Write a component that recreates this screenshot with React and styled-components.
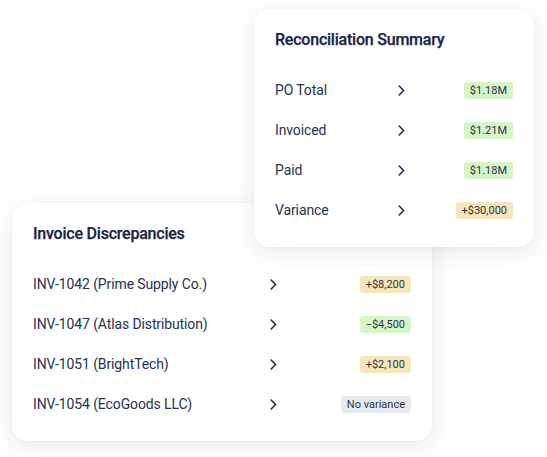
import React from "react";
import styled, { createGlobalStyle } from "styled-components";

const Global = createGlobalStyle`
  html, body { margin: 0; padding: 0; background: #ffffff; }
  body { font-family: Roboto, "Liberation Sans", Arial, sans-serif; }
`;

const Canvas = styled.div`
  width: 547px;
  height: 457px;
  overflow: hidden;
  display: flex;
  flex-direction: column;
`;

const Card = styled.section`
  position: relative;
  z-index: ${(p) => p.$z};
  box-sizing: border-box;
  width: ${(p) => p.$w}px;
  height: 238px;
  margin-left: ${(p) => p.$left}px;
  margin-top: ${(p) => p.$top}px;
  padding: 21px 21px 0 21px;
  background: #ffffff;
  border-radius: 16px;
  box-shadow: 0 6px 26px rgba(25, 35, 70, 0.09), 0 1px 4px rgba(25, 35, 70, 0.04);
`;

const Title = styled.h2`
  margin: 0 0 20px 0;
  height: 20px;
  line-height: 20px;
  font-size: 16px;
  font-weight: 500;
  letter-spacing: -0.22px;
  color: #1b2447;
  -webkit-text-stroke: 0.25px #1b2447;
`;

const Row = styled.div`
  display: grid;
  grid-template-columns: ${(p) => p.$labelW}px 7px 1fr;
  align-items: center;
  height: 40px;
`;

const Label = styled.span`
  font-size: 14px;
  letter-spacing: -0.12px;
  color: #283152;
  white-space: nowrap;
`;

const Chevron = styled.svg`
  display: block;
  width: 7px;
  height: 11px;
`;

const Badge = styled.span`
  justify-self: end;
  height: 17px;
  line-height: 17px;
  padding: 0 6px;
  border-radius: 3px;
  font-size: 11px;
  color: #2c3441;
  white-space: nowrap;
  background: ${(p) =>
    p.$tone === "green" ? "#d6f6c9" : p.$tone === "yellow" ? "#f6e6bd" : "#e7e9ee"};
`;

const Arrow = () => (
  <Chevron viewBox="0 0 7 11" fill="none">
    <path d="M1.2 1 L5.6 5.5 L1.2 10" stroke="#1f2847" strokeWidth="1.6" strokeLinecap="round" strokeLinejoin="round" />
  </Chevron>
);

const summary = [
  ["PO Total", "$1.18M", "green"],
  ["Invoiced", "$1.21M", "green"],
  ["Paid", "$1.18M", "green"],
  ["Variance", "+$30,000", "yellow"],
];

const discrepancies = [
  ["INV-1042 (Prime Supply Co.)", "+$8,200", "yellow"],
  ["INV-1047 (Atlas Distribution)", "\u2212$4,500", "green"],
  ["INV-1051 (BrightTech)", "+$2,100", "yellow"],
  ["INV-1054 (EcoGoods LLC)", "No variance", "gray"],
];

const List = ({ items, labelW }) =>
  items.map(([label, value, tone]) => (
    <Row key={label} $labelW={labelW}>
      <Label>{label}</Label>
      <Arrow />
      <Badge $tone={tone}>{value}</Badge>
    </Row>
  ));

export default function App() {
  return (
    <>
      <Global />
      <Canvas>
        <Card $w={280} $left={254} $top={9} $z={2}>
          <Title>Reconciliation Summary</Title>
          <List items={summary} labelW={123} />
        </Card>
        <Card $w={420} $left={12} $top={-44} $z={1}>
          <Title>Invoice Discrepancies</Title>
          <List items={discrepancies} labelW={237} />
        </Card>
      </Canvas>
    </>
  );
}
